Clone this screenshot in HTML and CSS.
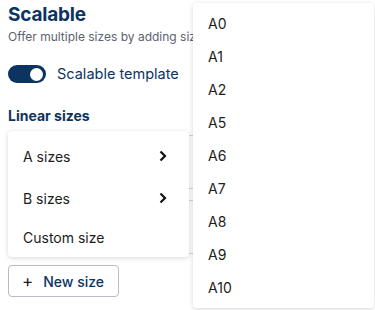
FILE: index.html
```html
<!DOCTYPE html>
<html lang="en">
<head>
    <meta charset="UTF-8">
    <meta name="viewport" content="width=device-width, initial-scale=1.0">
    <title>Scalable</title>
    <link rel="stylesheet" href="styles.css">
</head>
<body>
    <div class="panel">
        <h2>Scalable</h2>
        <p class="subtitle">Offer multiple sizes by adding sizes to this template.</p>
        <label class="toggle-row">
            <span class="toggle"><span class="knob"></span></span>
            <span>Scalable template</span>
        </label>
        <h3>Linear sizes</h3>
        <div class="size-row"></div>
        <div class="size-row"></div>
        <button class="new-size"><span class="plus">+</span> New size</button>

        <ul class="menu">
            <li class="menu-item">A sizes
                <svg width="8" height="12" viewBox="0 0 8 12"><path d="M1.5 1.5 6 6l-4.5 4.5" fill="none" stroke="#111" stroke-width="2.2"/></svg>
            </li>
            <li class="menu-item">B sizes
                <svg width="8" height="12" viewBox="0 0 8 12"><path d="M1.5 1.5 6 6l-4.5 4.5" fill="none" stroke="#111" stroke-width="2.2"/></svg>
            </li>
            <li class="menu-item short">Custom size</li>
        </ul>

        <ul class="menu submenu">
            <li class="menu-item">A0</li>
            <li class="menu-item">A1</li>
            <li class="menu-item">A2</li>
            <li class="menu-item">A5</li>
            <li class="menu-item">A6</li>
            <li class="menu-item">A7</li>
            <li class="menu-item">A8</li>
            <li class="menu-item">A9</li>
            <li class="menu-item">A10</li>
        </ul>
    </div>
</body>
</html>
```

FILE: styles.css
```css
body {
    margin: 0;
    font-family: Inter, "Noto Sans", sans-serif;
    color: #1c1d21;
    background: #fff;
}
.panel {
    position: relative;
    padding: 3px 8px 0;
    height: 307px;
    overflow: hidden;
}
h2 {
    margin: 0;
    font-size: 19px;
    line-height: 24px;
    font-weight: 700;
    letter-spacing: -0.2px;
    color: #0c3461;
}
.subtitle {
    margin: 2px 0 0;
    font-size: 12px;
    line-height: 16px;
    color: #5d6270;
    white-space: nowrap;
}
.toggle-row {
    display: flex;
    align-items: center;
    gap: 11px;
    margin-top: 19px;
    font-size: 14.5px;
    line-height: 20px;
    color: #0c3461;
}
.toggle {
    display: flex;
    align-items: center;
    justify-content: flex-end;
    width: 38px;
    height: 18px;
    padding: 0 3px;
    box-sizing: border-box;
    border-radius: 9px;
    background: #0c3461;
}
.knob {
    width: 13px;
    height: 13px;
    border-radius: 50%;
    background: #fff;
}
h3 {
    margin: 22px 0 0;
    font-size: 14px;
    line-height: 20px;
    font-weight: 700;
    color: #0c3461;
}
.size-row {
    height: 54px;
    margin-top: 11px;
    border: 1px solid #d4d6dc;
    border-radius: 4px;
    box-sizing: border-box;
    width: 250px;
}
.size-row:first-of-type {
    margin-top: 9px;
}
.new-size {
    display: flex;
    align-items: center;
    gap: 10px;
    width: 111px;
    height: 32px;
    margin-top: 11px;
    padding: 0 0 0 13px;
    border: 1px solid #b9bcc4;
    border-radius: 4px;
    background: #fff;
    font-family: inherit;
    font-size: 14px;
    font-weight: 500;
    color: #0c3461;
}
.plus {
    font-size: 17px;
    font-weight: 400;
    color: #1c1d21;
}
.menu {
    position: absolute;
    left: 8px;
    top: 131px;
    width: 181px;
    margin: 0;
    padding: 4px 0 2px;
    list-style: none;
    background: #fff;
    border-radius: 4px;
    box-shadow: 0 1px 5px rgba(0, 0, 0, 0.16);
}
.menu-item {
    display: flex;
    align-items: center;
    justify-content: space-between;
    height: 42px;
    padding: 0 22px 0 15px;
    font-size: 14px;
}
.menu-item.short {
    height: 36px;
}
.submenu {
    left: 193px;
    top: 3px;
    width: 181px;
    padding: 4px 0;
}
.submenu .menu-item {
    height: 33px;
}
```
